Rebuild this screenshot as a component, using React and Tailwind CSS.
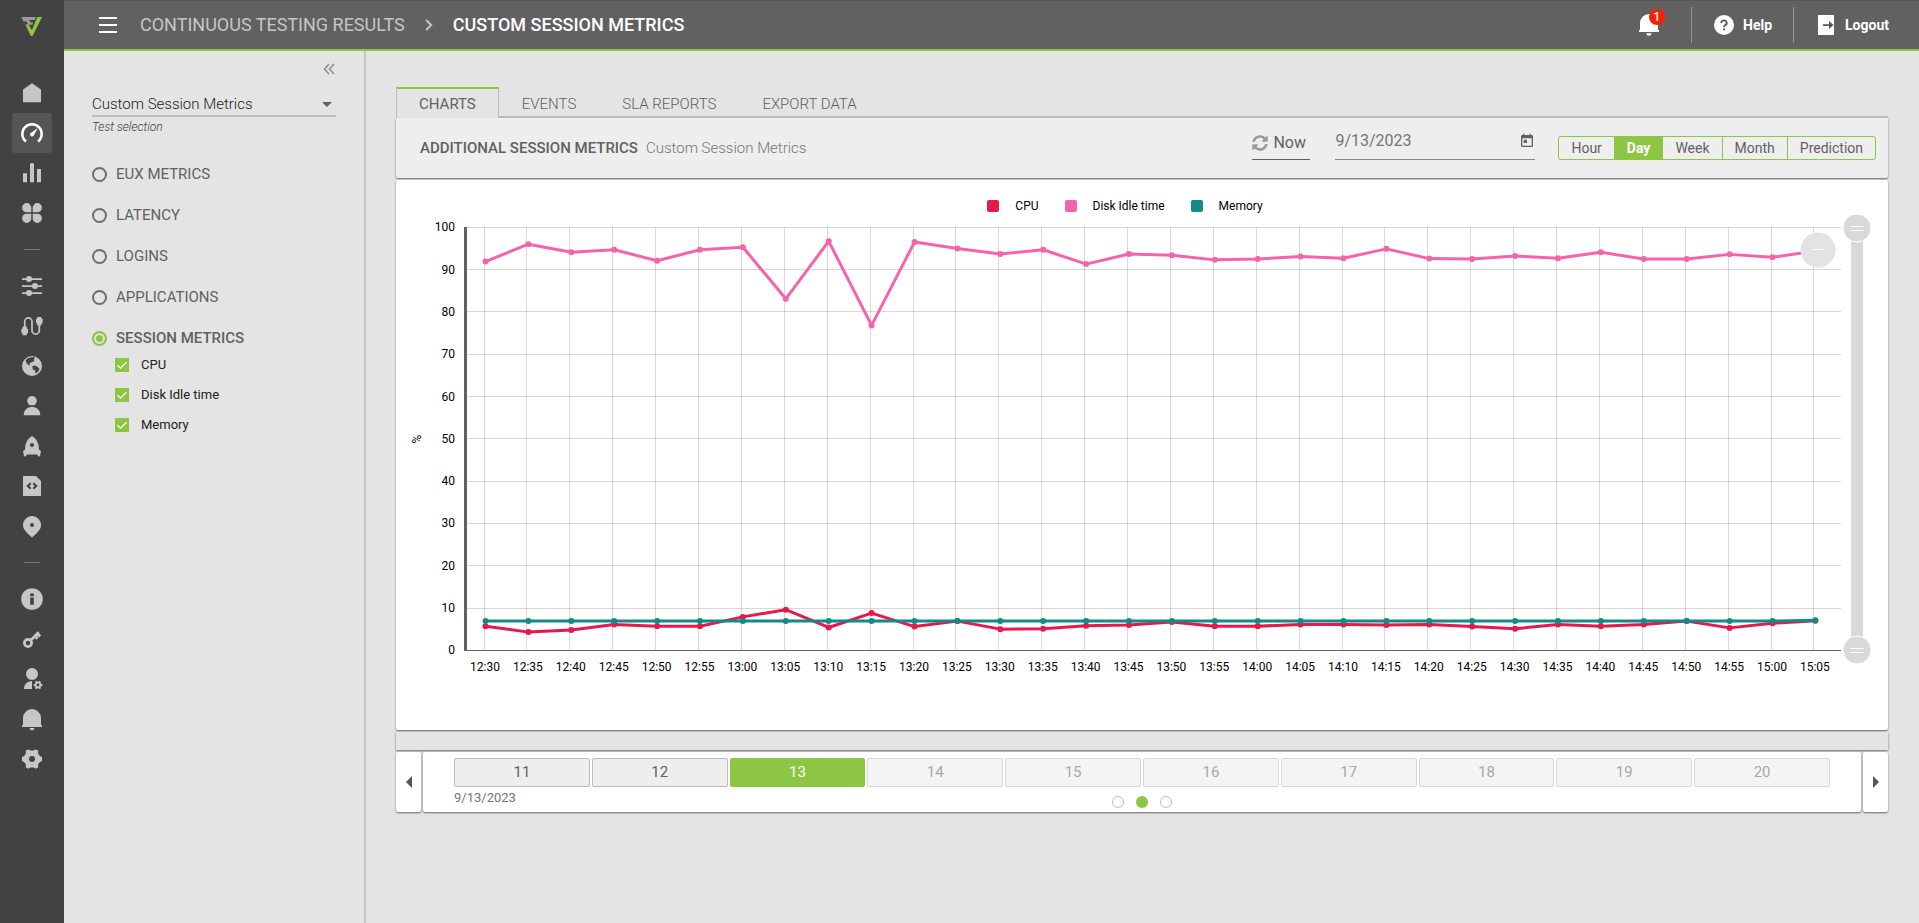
import React, { useState } from "react";
import { FaSyncAlt } from "react-icons/fa";
import { MdToday } from "react-icons/md";

function gearPath(cx, cy, outer, inner) {
  const points = [];
  for (let i = 0; i < 6; i++) {
    const base = i * 60;
    [[-21, inner], [-13, outer], [13, outer], [21, inner]].forEach(([offset, r]) => {
      const a = ((base + offset) * Math.PI) / 180;
      points.push(`${(cx + r * Math.cos(a)).toFixed(2)} ${(cy + r * Math.sin(a)).toFixed(2)}`);
    });
  }
  return `M${points.join("L")}Z`;
}

const DARK = "#424242";

const icons = {
  home: <path d="M12 2.3L21 8.6V21.3H3V8.6Z" />,
  gauge: (
    <>
      <path d="M6 20.6A9.7 9.7 0 1 1 18 20.6" fill="none" stroke="currentColor" strokeWidth="2.5" />
      <path d="M10.6 12.2L17 7.6L17.4 8L13.6 14.8A1.9 1.9 0 0 1 10.6 12.2Z" />
    </>
  ),
  bars: <path d="M3 12.3h4V21.2H3ZM10 2.2h4v19h-4ZM17 8h4v13.2h-4Z" />,
  clover: (
    <path d="M11.3 11.3H6.6A4.6 4.6 0 1 1 11.3 6.6ZM12.7 11.3V6.6A4.6 4.6 0 1 1 17.4 11.3ZM11.3 12.7V17.4A4.6 4.6 0 1 1 6.6 12.7ZM12.7 12.7H17.4A4.6 4.6 0 1 1 12.7 17.4Z" />
  ),
  sliders: (
    <>
      <path d="M2 4.2h20v1.7H2ZM2 11.2h20v1.7H2ZM2 18.2h20v1.7H2Z" />
      <circle cx="9" cy="5" r="3" />
      <circle cx="15" cy="12" r="3" />
      <circle cx="9" cy="19" r="3" />
    </>
  ),
  route: (
    <>
      <path d="M4.7 16V7.6A3.6 3.6 0 0 1 12 7.6V16.4A3.6 3.6 0 0 0 19.3 16.4V8" fill="none" stroke="currentColor" strokeWidth="1.7" />
      <path d="M2.6 12.5h4.2v2.2h1.2v4.6h-1.2v1.9H2.6v-1.9H1.4v-4.6h1.2ZM17.2 3h4.2v1.8h1.2v4.4h-1.2v2.3h-4.2V9.2H16V4.8h1.2Z" />
    </>
  ),
  globe: (
    <>
      <circle cx="12" cy="12" r="10" />
      <path d="M7.2 4.4L11 3.3L15.2 3.2L14 5.2L14.2 7.2L10.8 8.4L9.8 9.6L9.4 11.8L6.8 9.6L5.6 6.8Z" fill={DARK} />
      <path d="M12.4 12L15 11.4L17.4 12.8L19.6 15L18 18L15.4 19.4L15.2 16.8L12.6 15Z" fill={DARK} />
    </>
  ),
  user: (
    <>
      <circle cx="12" cy="6.8" r="4.8" />
      <path d="M3.7 21.3C3.9 15.6 7.6 13 12 13S20.1 15.6 20.3 21.3Z" />
    </>
  ),
  rocket: (
    <>
      <path d="M12 2C16.8 5 19 9.6 18.9 15.4L21 17.2L20.2 21.2L19 23L17 20.4H7L5 23L3.8 21.2L3 17.2L5.1 15.4C5 9.6 7.2 5 12 2Z" />
      <circle cx="12" cy="11" r="2" fill={DARK} />
    </>
  ),
  script: (
    <>
      <path d="M4 2H16L21 7V21.2A.8.8 0 0 1 20.2 22H3.8A.8.8 0 0 1 3 21.2V2.8A.8.8 0 0 1 3.8 2Z" />
      <path d="M10.6 9.2L7.8 12L10.6 14.8M13.4 9.2L16.2 12L13.4 14.8" fill="none" stroke={DARK} strokeWidth="2" />
    </>
  ),
  pin: (
    <>
      <path d="M12 2A9 9 0 0 1 21 11C21 15 19 17 12 23.6C5 17 3 15 3 11A9 9 0 0 1 12 2Z" />
      <circle cx="12" cy="11" r="2" fill={DARK} />
    </>
  ),
  info: (
    <>
      <circle cx="12" cy="12" r="10.8" />
      <path d="M10.2 6.6h3.6v2.6h-3.6ZM10.2 10.6h3.6v7.2h-3.6Z" fill={DARK} />
    </>
  ),
  key: (
    <>
      <circle cx="8" cy="16" r="3.6" fill="none" stroke="currentColor" strokeWidth="2.8" />
      <path d="M10.5 13.5L18.8 5.2M15 9.2L17.6 11.6M17 6.6L20.2 9.4" fill="none" stroke="currentColor" strokeWidth="2.8" />
    </>
  ),
  userGear: (
    <>
      <circle cx="12" cy="7" r="6" />
      <path d="M12 14V22H4C4 17 7.5 14.2 12 14Z" />
      <path d={gearPath(18, 18, 4.4, 3.2)} />
      <circle cx="18" cy="18" r="1.4" fill={DARK} />
    </>
  ),
  bell: (
    <path d="M3 18.2V11A9 9 0 0 1 21 11V18.2H22V20H2V18.2ZM9.5 21h5A2.5 2.4 0 0 1 9.5 21Z" />
  ),
  gear: (
    <>
      <path d="M8.5 2.2L10.2 3.6H13.800L15.500 2.200L18.400 3.800L18 6.200L19.800 9L22 9.900V14.100L19.800 15L18 17.800L18.400 20.200L15.500 21.800L13.800 20.400H10.200L8.500 21.800L5.600 20.200L6 17.800L4.200 15L2 14.100V9.900L4.200 9L6 6.200L5.600 3.800Z" strokeLinejoin="round" />
      <circle cx="12" cy="12" r="3" fill={DARK} />
    </>
  ),
};

const navGroups = [
  [["Home", "home"], ["Performance", "gauge"], ["Reports", "bars"], ["Workspaces", "clover"]],
  [["Configuration", "sliders"], ["Connections", "route"], ["Locations", "globe"], ["Accounts", "user"], ["Launchers", "rocket"], ["Scripts", "script"], ["Places", "pin"]],
  [["Information", "info"], ["Keys", "key"], ["User settings", "userGear"], ["Notifications", "bell"], ["Settings", "gear"]],
];

function Rail() {
  return (
    <nav aria-label="Main" className="flex w-16 shrink-0 flex-col items-center bg-[#424242]">
      <a href="#" aria-label="Start" className="mt-[14px] mb-[35px] block">
        <svg viewBox="0 0 24 24" className="size-6">
          <path d="M1.2 3H16L14.6 6H9L11 8.6H13.2L12.2 10.8H8.2L6.4 7.6H3.6Z" fill="#9a9a9a" />
          <path d="M17.2 3H22L12.6 22H10.8L5.4 10.6L8.4 10.2L11.9 16.2Z" fill="#8dc544" />
        </svg>
      </a>
      {navGroups.map((group, index) => (
        <React.Fragment key={index}>
          {index > 0 && <hr className="my-4 w-4 border-t border-[#757575]" />}
          {group.map(([label, icon]) => (
            <button
              key={icon}
              type="button"
              aria-label={label}
              className={
                icon === "gauge"
                  ? "flex size-10 items-center justify-center rounded-[3px] bg-[#555555] text-white"
                  : "flex size-10 items-center justify-center text-[#c6c6c6]"
              }
            >
              <svg viewBox="0 0 24 24" className="size-6" fill="currentColor">
                {icons[icon]}
              </svg>
            </button>
          ))}
        </React.Fragment>
      ))}
    </nav>
  );
}

function TopBar() {
  return (
    <header className="flex h-[51px] items-center border-t border-b-2 border-t-[#555555] border-b-[#8dc544] bg-[#616161] pr-[30px] pl-[35px] text-white">
      <button type="button" aria-label="Menu" className="flex w-[18px] flex-col gap-[5px]">
        <span className="h-[2px] bg-white" />
        <span className="h-[2px] bg-white" />
        <span className="h-[2px] bg-white" />
      </button>
      <a href="#" className="ml-[23px] text-lg text-[#c6c6c6]">CONTINUOUS TESTING RESULTS</a>
      <svg viewBox="0 0 8 12" className="ml-5 h-3 w-2" fill="none" stroke="#c6c6c6" strokeWidth="2">
        <path d="M1.2 1L6.2 6L1.2 11" />
      </svg>
      <h1 className="ml-5 text-lg font-medium">CUSTOM SESSION METRICS</h1>
      <button type="button" aria-label="Notifications, 1 new" className="relative ml-auto block">
        <svg viewBox="0 0 20 22" className="h-[22px] w-5" fill="currentColor">
          <path d="M1 16V9A9 9 0 0 1 19 9V16H20V18H0V16ZM7.5 19.3h5A2.5 2.5 0 0 1 7.5 19.3Z" />
        </svg>
        <span className="absolute -top-[5px] left-[10px] flex size-4 items-center justify-center rounded-full bg-[#f22300] text-xs font-medium">
          1
        </span>
      </button>
      <a href="#" className="ml-8 flex h-9 items-center gap-[9px] border-l border-[#949494] pl-[22px] text-sm font-bold">
        <svg viewBox="0 0 20 20" className="size-5">
          <circle cx="10" cy="10" r="10" fill="#fff" />
          <path d="M7.3 8A2.7 2.5 0 1 1 11.3 10.1C10.4 10.7 10 11 10 12.2" fill="none" stroke="#555" strokeWidth="1.8" />
          <path d="M9.1 13.4h1.9v1.9H9.1Z" fill="#555" />
        </svg>
        Help
      </a>
      <a href="#" className="ml-[21px] flex h-9 items-center gap-[11px] border-l border-[#949494] pl-6 text-sm font-bold">
        <svg viewBox="0 0 16 20" className="h-5 w-4">
          <path d="M0 0H16V20H0Z" fill="#fff" />
          <path d="M5 9.2h6V6L15.5 10L11 14V10.900H5Z" fill="#555" />
        </svg>
        Logout
      </a>
    </header>
  );
}

const categories = ["EUX METRICS", "LATENCY", "LOGINS", "APPLICATIONS", "SESSION METRICS"];
const metrics = ["CPU", "Disk Idle time", "Memory"];

function FilterPanel() {
  const [category, setCategory] = useState("SESSION METRICS");
  return (
    <aside className="flex w-[302px] shrink-0 flex-col border-r-2 border-[#c6c6c6] px-7">
      <button type="button" aria-label="Collapse panel" className="mt-3 self-end pr-[1px]">
        <svg viewBox="0 0 12 12" className="size-3" fill="none" stroke="#8a8a8a" strokeWidth="1.4">
          <path d="M6 1L1.5 6L6 11M11 1L6.5 6L11 11" />
        </svg>
      </button>
      <div className="relative mt-[18px] flex items-center border-b-2 border-[#bdbdbd]">
        <select id="test" className="h-[22px] w-full appearance-none bg-transparent text-[15px] font-light text-[#212121]">
          <option>Custom Session Metrics</option>
        </select>
        <svg viewBox="0 0 10 5" className="pointer-events-none absolute right-1 h-[5px] w-[10px]" fill="#616161">
          <path d="M0 0H10L5 5Z" />
        </svg>
      </div>
      <label htmlFor="test" className="mt-[2px] text-xs leading-4 font-light text-[#424242] italic">
        Test selection
      </label>
      <fieldset className="mt-[19px] flex flex-col">
        {categories.map((name) => (
          <label
            key={name}
            className={
              name === category
                ? "flex h-[41px] items-center gap-[9px] text-[15px] font-medium text-[#616161]"
                : "flex h-[41px] items-center gap-[9px] text-[15px] text-[#616161]"
            }
          >
            <input
              type="radio"
              name="category"
              checked={name === category}
              onChange={() => setCategory(name)}
              className="size-[15px] appearance-none rounded-full border-2 border-[#6e6e6e] checked:border-[#8dc544] checked:bg-[#8dc544] checked:shadow-[inset_0_0_0_2px_#e4e4e4]"
            />
            {name}
          </label>
        ))}
      </fieldset>
      <ul className="-mt-[9px] flex flex-col pl-[23px]">
        {metrics.map((name) => (
          <li key={name}>
            <label className="flex h-[30px] items-center gap-3 text-[13px] text-[#212121]">
              <span className="grid">
                <input
                  type="checkbox"
                  defaultChecked
                  className="peer col-start-1 row-start-1 size-[14px] appearance-none border border-[#757575] checked:border-[#8dc544] checked:bg-[#8dc544]"
                />
                <svg viewBox="0 0 14 14" className="pointer-events-none invisible col-start-1 row-start-1 size-[14px] peer-checked:visible" fill="none" stroke="#fff" strokeWidth="1.3">
                  <path d="M2.5 7.2L5.5 10.2L11.5 4.2" />
                </svg>
              </span>
              {name}
            </label>
          </li>
        ))}
      </ul>
    </aside>
  );
}

const tabs = ["CHARTS", "EVENTS", "SLA REPORTS", "EXPORT DATA"];

function Tabs() {
  return (
    <div role="tablist" className="flex text-[15px]">
      {tabs.map((name, index) => (
        <button
          key={name}
          type="button"
          role="tab"
          aria-selected={index === 0}
          className={
            index === 0
              ? "h-[31px] border-x border-t-2 border-x-[#bdbdbd] border-t-[#8dc544] px-[22px] pt-[2px] text-[#616161]"
              : "h-[31px] border-b-2 border-[#bdbdbd] px-[23px] pt-[6px] font-light text-[#616161]"
          }
        >
          {name}
        </button>
      ))}
      <div className="flex-1 border-b-2 border-[#bdbdbd]" />
    </div>
  );
}

const ranges = ["Hour", "Day", "Week", "Month", "Prediction"];

function ChartHeader() {
  return (
    <div className="flex h-[60px] items-center rounded-b-[2px] bg-[#eeeeee] pr-3 pl-6 text-[15px] text-[#616161] shadow-[0_1px_2px_rgba(0,0,0,0.55)]">
      <h2 className="font-medium">ADDITIONAL SESSION METRICS</h2>
      <p className="ml-2 font-light text-[#757575]">Custom Session Metrics</p>
      <button type="button" className="ml-auto flex h-[42px] w-[58px] items-center gap-[5px] self-start border-b border-[#616161] pt-2 text-base">
        <FaSyncAlt className="size-4 shrink-0 text-[#999999]" />
        Now
      </button>
      <div className="ml-[25px] flex h-[42px] w-[200px] items-center self-start border-b border-[#8a8a8a] pt-1 text-base">
        <input aria-label="Date" defaultValue="9/13/2023" className="min-w-0 flex-1 bg-transparent text-[#757575]" />
        <button type="button" aria-label="Open calendar">
          <MdToday className="size-4 text-[#616161]" />
        </button>
      </div>
      <div className="ml-[23px] flex h-6 divide-x divide-[#8dc544] overflow-hidden rounded-[3px] border border-[#8dc544] text-sm leading-[21px]">
        {ranges.map((name) => (
          <button
            key={name}
            type="button"
            className={name === "Day" ? "bg-[#8dc544] px-3 font-bold text-white" : "px-3"}
          >
            {name}
          </button>
        ))}
      </div>
    </div>
  );
}

const series = [
  {
    name: "Disk Idle time",
    color: "#f564ab",
    values: [91.9, 96, 94.1, 94.7, 92.1, 94.7, 95.3, 83.1, 96.7, 76.8, 96.5, 95, 93.7, 94.7, 91.3, 93.7, 93.4, 92.3, 92.5, 93.1, 92.7, 94.9, 92.6, 92.5, 93.2, 92.7, 94.1, 92.5, 92.5, 93.6, 92.9, 94.4],
  },
  {
    name: "CPU",
    color: "#e6194b",
    values: [5.7, 4.3, 4.8, 6.1, 5.7, 5.7, 7.9, 9.6, 5.4, 8.8, 5.6, 6.9, 5, 5.1, 5.8, 6, 6.7, 5.7, 5.7, 6.1, 6.1, 6, 6.1, 5.6, 5.1, 6.1, 5.7, 6.1, 6.9, 5.3, 6.4, 7],
  },
  {
    name: "Memory",
    color: "#148a86",
    values: Array.from({ length: 32 }, (_, i) => (i === 31 ? 7.1 : 6.9)),
  },
];

const legend = [
  { name: "CPU", color: "#e6194b" },
  { name: "Disk Idle time", color: "#f564ab" },
  { name: "Memory", color: "#148a86" },
];

const times = Array.from({ length: 32 }, (_, i) => {
  const minutes = 12 * 60 + 30 + i * 5;
  return `${Math.floor(minutes / 60)}:${String(minutes % 60).padStart(2, "0")}`;
});

const xAt = (i) => 89 + i * 42.9;
const yAt = (value) => 470.3 - value * 4.23;

function Grip({ y }) {
  return (
    <g>
      <circle cx="1461" cy={y} r="14" fill="#d9d9d9" stroke="#fff" />
      <path d={`M1454.5 ${y - 1.5}h13M1454.5 ${y + 2.5}h13`} stroke="#fff" />
    </g>
  );
}

function Chart() {
  return (
    <div className="rounded-[2px] bg-white pt-[18px] shadow-[0_1px_2px_rgba(0,0,0,0.55)]">
      <ul className="flex h-4 items-center justify-center gap-[26px] pr-[34px] text-xs text-black">
        {legend.map((item) => (
          <li key={item.name} className="flex items-center gap-4">
            <svg viewBox="0 0 12 12" className="size-3">
              <rect width="12" height="12" rx="2" fill={item.color} />
            </svg>
            {item.name}
          </li>
        ))}
      </ul>
      <svg viewBox="0 34 1492 516" className="block w-full text-[12px]" fill="none" role="img" aria-label="Additional session metrics in percent">
        <g stroke="#000" strokeOpacity="0.15">
          {times.map((time, i) => (
            <path key={time} d={`M${Math.floor(xAt(i)) - 0.5} 47V470`} />
          ))}
          {Array.from({ length: 10 }, (_, i) => (
            <path key={i} d={`M71 ${Math.floor(yAt(100 - i * 10)) + 0.5}H1445`} />
          ))}
        </g>
        <path d="M68 470.5H1445" stroke="#616161" />
        <path d="M69.5 47V471" stroke="#616161" strokeWidth="3" />
        <g fill="#000" textAnchor="end">
          {Array.from({ length: 11 }, (_, i) => (
            <text key={i} x="59" y={yAt(i * 10) + 4}>{i * 10}</text>
          ))}
        </g>
        <g fill="#000" textAnchor="middle">
          {times.map((time, i) => (
            <text key={time} x={xAt(i)} y="491">{time}</text>
          ))}
        </g>
        <text transform="translate(25 259) rotate(-90)" textAnchor="middle" fontSize="12" fill="#000">%</text>
        {series.map((line) => (
          <g key={line.name}>
            <polyline
              points={line.values.map((value, i) => `${xAt(i) + 0.5},${yAt(value)}`).join(" ")}
              stroke={line.color}
              strokeWidth="3"
              strokeLinejoin="round"
            />
            {line.values.map((value, i) => (
              <circle key={i} cx={xAt(i) + 0.5} cy={yAt(value)} r="3" fill={line.color} />
            ))}
          </g>
        ))}
        <rect x="1455" y="48" width="12" height="422" fill="#d9d9d9" />
        <Grip y={48} />
        <Grip y={470} />
        <circle cx="1422" cy="70" r="17.5" fill="#e3e3e3" />
        <path d="M1416.5 69.5h11" stroke="#fff" />
      </svg>
    </div>
  );
}

const hours = [11, 12, 13, 14, 15, 16, 17, 18, 19, 20];

function Timeline() {
  return (
    <div className="flex h-[60px] gap-[2px]">
      <button type="button" aria-label="Previous" className="flex w-[25px] items-center justify-center rounded-[2px] bg-white shadow-[0_1px_2px_rgba(0,0,0,0.55)]">
        <svg viewBox="0 0 6 12" className="h-3 w-[6px]" fill="#555"><path d="M6 0V12L0 6Z" /></svg>
      </button>
      <div className="grid flex-1 grid-rows-[29px_1fr] rounded-[2px] bg-white px-[31px] pt-[6px] shadow-[0_1px_2px_rgba(0,0,0,0.55)]">
        <div className="grid grid-cols-10 gap-[2px] text-[15px]">
          {hours.map((hour) => (
            <button
              key={hour}
              type="button"
              disabled={hour > 13}
              className={
                hour === 13
                  ? "rounded-[2px] bg-[#8dc544] text-white"
                  : hour > 13
                    ? "rounded-[2px] border border-[#d9d9d9] bg-[#f4f4f4] text-[#a8a8a8]"
                    : "rounded-[2px] border border-[#bdbdbd] bg-[#eeeeee] text-[#616161]"
              }
            >
              {hour}
            </button>
          ))}
        </div>
        <div className="grid grid-cols-3 items-start">
          <span className="mt-[3px] text-[13px] leading-4 text-[#757575]">9/13/2023</span>
          <div className="mt-[9px] flex justify-center gap-3">
            <button type="button" aria-label="Page 1" className="size-3 rounded-full border border-[#bdbdbd]" />
            <button type="button" aria-label="Page 2" className="size-3 rounded-full bg-[#8dc544]" />
            <button type="button" aria-label="Page 3" className="size-3 rounded-full border border-[#bdbdbd]" />
          </div>
        </div>
      </div>
      <button type="button" aria-label="Next" className="flex w-[25px] items-center justify-center rounded-[2px] bg-white shadow-[0_1px_2px_rgba(0,0,0,0.55)]">
        <svg viewBox="0 0 6 12" className="h-3 w-[6px]" fill="#555"><path d="M0 0V12L6 6Z" /></svg>
      </button>
    </div>
  );
}

export default function App() {
  return (
    <div className="flex min-h-screen bg-[#e4e4e4] font-['Roboto',sans-serif]">
      <Rail />
      <div className="flex min-w-0 flex-1 flex-col">
        <TopBar />
        <div className="flex flex-1">
          <FilterPanel />
          <main className="min-w-0 flex-1 pt-9 pr-[31px] pl-[30px]">
            <Tabs />
            <div className="flex flex-col gap-[2px]">
              <ChartHeader />
              <Chart />
              <div className="h-[18px] bg-[#e4e4e4] shadow-[0_1px_2px_rgba(0,0,0,0.55)]" />
              <Timeline />
            </div>
          </main>
        </div>
      </div>
    </div>
  );
}
